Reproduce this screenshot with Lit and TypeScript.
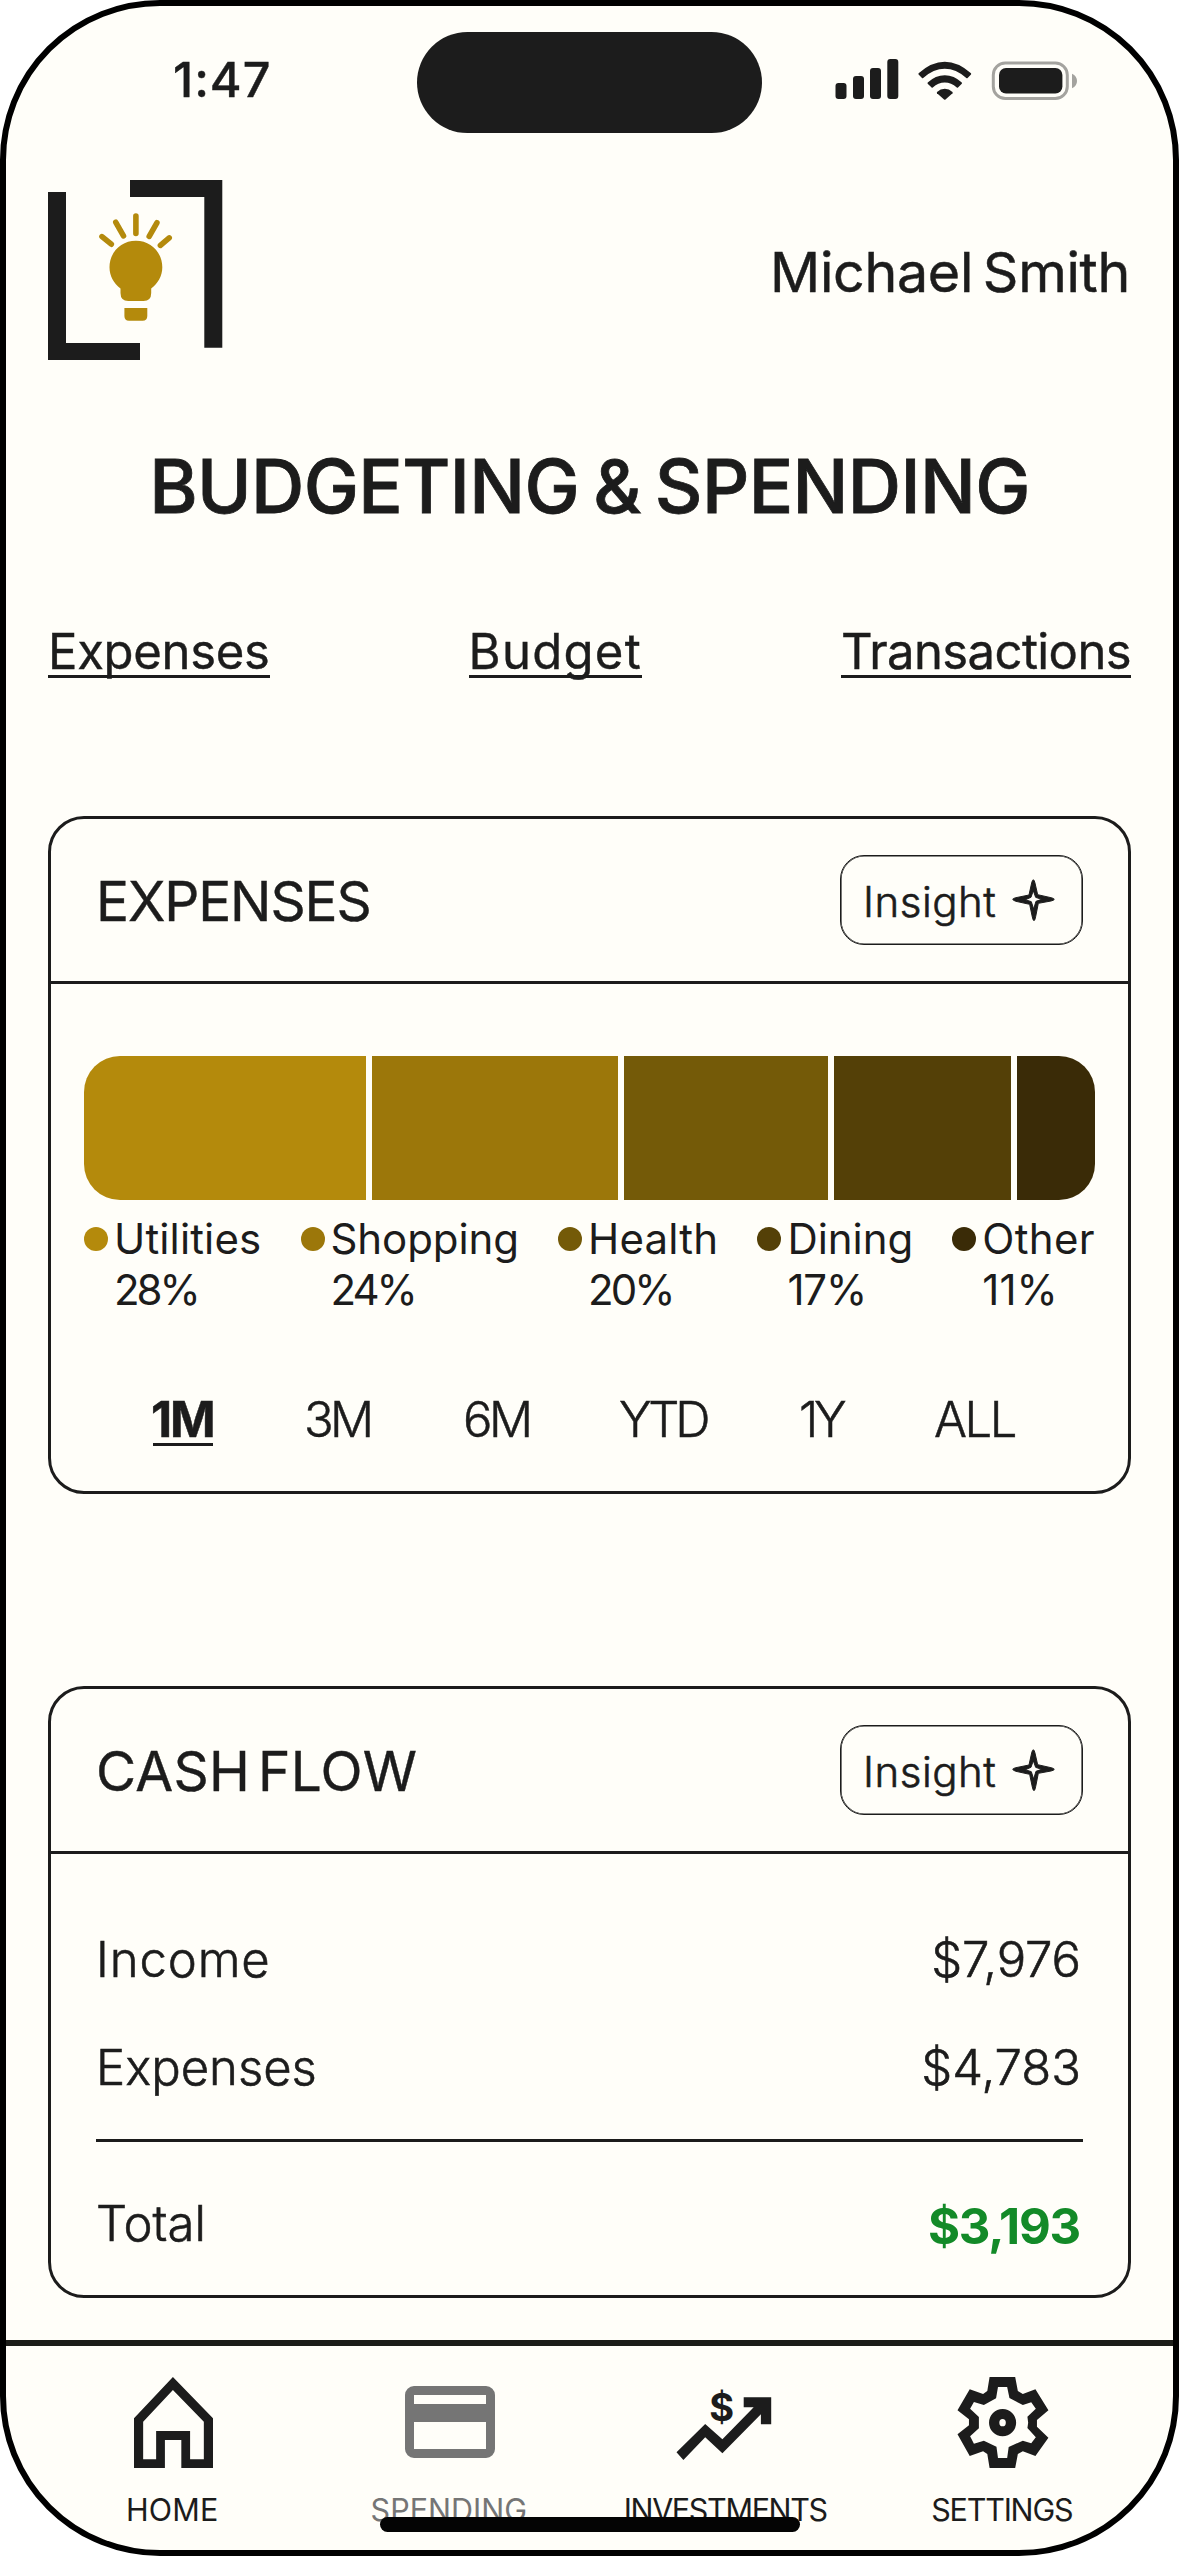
import { LitElement, html, svg, css } from "lit";
import { customElement, property } from "lit/decorators.js";
import { classMap } from "lit/directives/class-map.js";

interface Glyphs {
  text: string;
  /** letter spacing in px */
  ls: number;
}

const tracked = (g: Glyphs) => html`<span style="letter-spacing:${g.ls}px">${g.text}</span>`;

const tabs: Glyphs[] = [
  { text: "Expenses", ls: -0.3 },
  { text: "Budget", ls: 1.3 },
  { text: "Transactions", ls: -0.6 },
];

const categories = [
  { name: { text: "Utilities", ls: 0.14 }, pct: { text: "28%", ls: -3 }, width: 282, color: "#b48a0c" },
  { name: { text: "Shopping", ls: -0.1 }, pct: { text: "24%", ls: -3 }, width: 246, color: "#9c770a" },
  { name: { text: "Health", ls: 0.2 }, pct: { text: "20%", ls: -3 }, width: 204, color: "#745a08" },
  { name: { text: "Dining", ls: -0.06 }, pct: { text: "17%", ls: -1.2 }, width: 177, color: "#544007" },
  { name: { text: "Other", ls: 0.33 }, pct: { text: "11%", ls: 0 }, width: 78, color: "#3a2b07" },
];

const ranges: (Glyphs & { active?: boolean })[] = [
  { text: "1M", ls: -2.1, active: true },
  { text: "3M", ls: -3.6 },
  { text: "6M", ls: -3.6 },
  { text: "YTD", ls: -4.3 },
  { text: "1Y", ls: -4.2 },
  { text: "ALL", ls: -2.5 },
];

const homeIcon = svg`<g transform="translate(15 9) scale(.3816 .3333) translate(-350 -171)">
  <path fill-rule="evenodd" d="M452 171L557 295V444H474V360H431V444H350V295ZM452 210L374 305V418H408V333H497V418H533V305Z"/></g>`;

const cardIcon = svg`<path fill-rule="evenodd" d="M18 18H90A9 9 0 0 1 99 27V81A9 9 0 0 1 90 90H18A9 9 0 0 1 9 81V27A9 9 0 0 1 18 18ZM18 27V36H90V27ZM18 54V81H90V54Z"/>`;

const investIcon = svg`<path d="M4.5 84.3L33.2 56L50.4 71.3L81.7 39.3H71.7V29.3H99.2V56.3H88.9V46.3L50.4 85.3L33.2 69.3L11.4 92Z"/>
  <text class="dollar" x="49.7" y="53" text-anchor="middle">$</text>`;

const gearIcon = svg`<g transform="translate(8.5 9) scale(.382 .3333) translate(-987 -171)">
  <path fill-rule="evenodd" d="M1071 171H1138L1145 213L1158 222L1191 208L1225 271L1195 300V320L1225 353L1191 408L1158 394L1145 402L1138 444H1071L1065 402L1054 394L1019 408L987 343L1017 316V298L987 271L1019 208L1054 222L1065 213Z
  M1093 201L1088 235L1056 255L1030 246L1020 266L1043 291V325L1020 349L1030 371L1056 362L1089 380L1093 414H1117L1121 381L1158 362L1180 370L1192 352L1170 324L1172 308L1170 290L1192 266L1180 247L1158 255L1123 234L1117 201Z"/>
  <path fill-rule="evenodd" d="M1105 267A35.5 41 0 0 1 1105 349A35.5 41 0 0 1 1105 267ZM1105 297A8.5 11 0 0 0 1105 319A8.5 11 0 0 0 1105 297Z"/></g>`;

const navItems = [
  { label: { text: "HOME", ls: 0.15 }, icon: homeIcon, active: false },
  { label: { text: "SPENDING", ls: 0 }, icon: cardIcon, active: true },
  { label: { text: "INVESTMENTS", ls: -1.34 }, icon: investIcon, active: false },
  { label: { text: "SETTINGS", ls: -1.2 }, icon: gearIcon, active: false },
];

@customElement("insight-card")
export class InsightCard extends LitElement {
  @property() heading = "";
  @property({ type: Number }) spacing = 0;

  static styles = css`
    :host { display: block; box-sizing: border-box; border: 3px solid #1c1c1c; border-radius: 36px; }
    .head { display: flex; justify-content: space-between; align-items: center; height: 162px; padding: 0 45px; border-bottom: 3px solid #1c1c1c; }
    .title { font-size: 55px; line-height: 66px; padding-top: 2px; white-space: nowrap; word-spacing: -8px; -webkit-text-stroke: 0.4px currentColor; }
    .button { display: flex; align-items: center; box-sizing: border-box; width: 243px; height: 90px; padding-left: 22px; border: 1px solid #1c1c1c; border-radius: 24px; box-shadow: inset 0 0 0 0.6px #1c1c1c; }
    .label { font-size: 42px; line-height: 50px; font-weight: 300; letter-spacing: 0.5px; padding-top: 4px; -webkit-text-stroke: 0.6px currentColor; }
    .star { width: 43.3px; height: 42.7px; margin-left: 16px; fill: #1c1c1c; stroke: #1c1c1c; stroke-width: 3; stroke-linejoin: round; overflow: visible; }
  `;

  render() {
    return html`
      <div class="head">
        <div class="title" style="letter-spacing:${this.spacing}px">${this.heading}</div>
        <div class="button">
          <span class="label">Insight</span>
          <svg class="star" viewBox="40 41 130 128">
            <path fill-rule="evenodd" d="M104 43Q107 44 109 53L117 88L157 97Q166 99 167 102Q166 105 157 107L119 114L111 154Q109 165 106 166Q103 165 101 155L93 117L52 108Q43 105 42 102Q43 99 52 97L91 89L99 53Q101 44 104 43ZM104 76L97 96L80 103L98 109L105 131L112 108L129 102L111 96Z"/>
          </svg>
        </div>
      </div>
      <slot></slot>
    `;
  }
}

@customElement("app-root")
export class AppRoot extends LitElement {
  static styles = css`
    :host { display: block; background: #fff; color: #1c1c1c; font-family: Inter, "Liberation Sans", sans-serif; }
    .phone { position: relative; box-sizing: border-box; display: flex; flex-direction: column; width: 1179px; height: 2556px; border: 6px solid #000; border-radius: 160px; background: #fffef9; overflow: hidden; }
    .status { display: grid; grid-template-columns: 411px 345px 1fr; height: 101px; padding-top: 26px; }
    .time { font-size: 48.5px; line-height: 96px; font-weight: 500; letter-spacing: 1px; padding-left: 167px; -webkit-text-stroke: 0.4px currentColor; }
    .island { border-radius: 51px; background: #1c1c1c; }
    .signals { width: 243px; height: 42px; margin: 26px 0 0 73px; fill: #1c1c1c; }
    .header { display: flex; justify-content: space-between; align-items: center; height: 180px; margin-top: 47px; padding: 0 43px 0 42px; }
    .logo { width: 175px; height: 180px; }
    .name { font-size: 55.5px; line-height: 66px; letter-spacing: -0.3px; word-spacing: -5.5px; padding-top: 4px; -webkit-text-stroke: 0.5px currentColor; }
    .title { margin: 81px 0 0; text-align: center; font-size: 73.8px; line-height: 92px; font-weight: 500; letter-spacing: -0.6px; word-spacing: -5px; white-space: nowrap; -webkit-text-stroke: 0.8px currentColor; }
    .tabs { display: flex; justify-content: space-between; margin-top: 96px; padding: 0 42px; }
    .tab { font-size: 49px; line-height: 46px; border-bottom: 3px solid #1c1c1c; -webkit-text-stroke: 0.4px currentColor; }
    .expenses { margin: 138px 42px 0; }
    .cashflow { margin: 192px 42px 0; }
    .spend { padding: 72px 33px 45px; }
    .bar { display: flex; gap: 6px; height: 144px; border-radius: 36px; overflow: hidden; }
    .legend { display: flex; justify-content: space-between; margin-top: 13px; }
    .entry { display: grid; grid-template-columns: 24px auto; column-gap: 6px; align-items: center; font-size: 42px; line-height: 51px; }
    .dot { width: 24px; height: 24px; border-radius: 50%; }
    .pct { grid-column: 2; }
    .ranges { display: grid; grid-template-columns: 151px 159px 156px 180px 135px 1fr; justify-items: start; margin-top: 82px; padding-left: 69px; font-size: 49px; line-height: 46px; font-weight: 300; -webkit-text-stroke: 0.5px currentColor; }
    .range { border-bottom: 3px solid transparent; white-space: nowrap; }
    .range.active { box-sizing: border-box; width: 60px; text-indent: -2px; font-weight: 700; border-bottom-color: #1c1c1c; }
    .flows { padding: 51px 45px 0; font-size: 49px; font-weight: 300; -webkit-text-stroke: 0.6px currentColor; }
    .row { display: flex; justify-content: space-between; align-items: center; height: 108px; padding-right: 2px; }
    .row.total { box-sizing: border-box; height: 156px; margin-top: 18px; padding: 9px 0 0; border-top: 3px solid #1c1c1c; }
    .net { color: #138a28; font-weight: 700; padding: 6px 3px 0 0; -webkit-text-stroke: 0; }
    .nav { display: grid; grid-template-columns: repeat(4, 276.5px); margin-top: 42px; padding: 22px 0 0 29px; border-top: 6px solid #1c1d19; }
    .item { display: flex; flex-direction: column; align-items: center; gap: 14px; font-size: 30.5px; line-height: 40px; fill: #1c1c1c; }
    .item.active { color: #757575; fill: #757575; }
    .item span { position: relative; left: -1px; }
    .icon { width: 108px; height: 108px; }
    .dollar { font-size: 38px; font-weight: 700; }
    .indicator { position: absolute; left: 374px; top: 2511px; width: 420px; height: 15px; border-radius: 8px; background: #040404; }
  `;

  private statusIcons() {
    return html`<svg class="signals" viewBox="835 58 243 42">
      <rect x="835.5" y="83" width="11" height="16" rx="3"/>
      <rect x="853" y="76" width="11" height="23" rx="3"/>
      <rect x="870" y="68" width="11" height="31" rx="3"/>
      <rect x="887.3" y="59" width="11" height="40" rx="3"/>
      <path d="M918.6 73.3Q931.5 61.8 944.8 61.8Q958 61.8 971 73.3Q971.4 74 971 74.6L967.6 78.1Q967 78.6 966.3 78Q956 68.8 944.8 68.8Q933.5 68.8 923.2 78Q922.5 78.6 922 78.1L918.6 74.6Q918.2 74 918.6 73.3Z"/>
      <path d="M927.7 82.6Q935.5 75.3 944.8 75.3Q954 75.3 961.8 82.6Q962.2 83.3 961.8 83.8L958 87.6Q957.4 88 956.8 87.5Q951.2 82.4 944.8 82.4Q938.2 82.4 932.8 87.5Q932.2 88 931.6 87.6L927.7 83.8Q927.3 83.3 927.7 82.6Z"/>
      <path d="M937 92Q940.5 88.7 944.8 88.7Q949 88.7 952.5 92Q952.9 92.6 952.5 93.2L945.5 99.5Q944.8 100 944.1 99.5L937 93.2Q936.7 92.6 937 92Z"/>
      <rect x="993.3" y="63" width="74" height="35.5" rx="12" fill="none" stroke="#a4a39f" stroke-width="3"/>
      <path d="M1072 73.7Q1077 76 1077 81Q1077 86 1072 88.3Z" fill="#a4a39f"/>
      <rect x="999" y="68" width="63.4" height="25.6" rx="7"/>
    </svg>`;
  }

  private logo() {
    return html`<svg class="logo" viewBox="48 180 175 180">
      <path fill="#1c1c1c" d="M48 192H66V343H140V360H48ZM130 180H222.3V347.7H204.3V197H130Z"/>
      <g fill="#b48a0c">
        <path d="M135.9 240.7C151 240.7 162.3 252.5 162.3 267.3C162.3 276 158 283.5 151.2 288.5V293Q151.2 301 143.5 301H128.3Q120.5 301 120.5 293V288.5C113.8 283.5 109.5 276 109.5 267.3C109.5 252.5 120.8 240.7 135.9 240.7Z"/>
        <path d="M124.4 308H147.3V316Q147.3 320.7 142.6 320.7H129Q124.4 320.7 124.4 316Z"/>
      </g>
      <path fill="none" stroke="#b48a0c" stroke-width="5.6" stroke-linecap="round" d="M135.9 216V233.5M115.8 222.3L123.5 235.8M102 236.6L111.3 244.2M156.9 222.8L149.2 236.3M169.2 237.9L160.4 245.4"/>
    </svg>`;
  }

  render() {
    return html`
      <div class="phone">
        <div class="status">
          <div class="time">1:47</div>
          <div class="island"></div>
          ${this.statusIcons()}
        </div>
        <div class="header">
          ${this.logo()}
          <div class="name">Michael Smith</div>
        </div>
        <h1 class="title">BUDGETING &amp; SPENDING</h1>
        <div class="tabs">${tabs.map((t) => html`<div class="tab">${tracked(t)}</div>`)}</div>

        <insight-card class="expenses" heading="EXPENSES" spacing="-1.16">
          <div class="spend">
            <div class="bar">
              ${categories.map((c) => html`<div style="width:${c.width}px;background:${c.color}"></div>`)}
            </div>
            <div class="legend">
              ${categories.map((c) => html`
                <div class="entry">
                  <i class="dot" style="background:${c.color}"></i>
                  ${tracked(c.name)}
                  <div class="pct">${tracked(c.pct)}</div>
                </div>`)}
            </div>
            <div class="ranges">
              ${ranges.map((r) => html`<div class=${classMap({ range: true, active: !!r.active })}>${tracked(r)}</div>`)}
            </div>
          </div>
        </insight-card>

        <insight-card class="cashflow" heading="CASH FLOW" spacing="0.25">
          <div class="flows">
            <div class="row">${tracked({ text: "Income", ls: 0.9 })}${tracked({ text: "$7,976", ls: -0.1 })}</div>
            <div class="row">${tracked({ text: "Expenses", ls: 0 })}${tracked({ text: "$4,783", ls: 0 })}</div>
            <div class="row total">${tracked({ text: "Total", ls: 0.1 })}<div class="net">${tracked({ text: "$3,193", ls: -1.2 })}</div></div>
          </div>
        </insight-card>

        <div class="nav">
          ${navItems.map((n) => html`
            <div class=${classMap({ item: true, active: n.active })}>
              <svg class="icon" viewBox="0 0 108 108">${n.icon}</svg>
              ${tracked(n.label)}
            </div>`)}
        </div>
        <div class="indicator"></div>
      </div>
    `;
  }
}
